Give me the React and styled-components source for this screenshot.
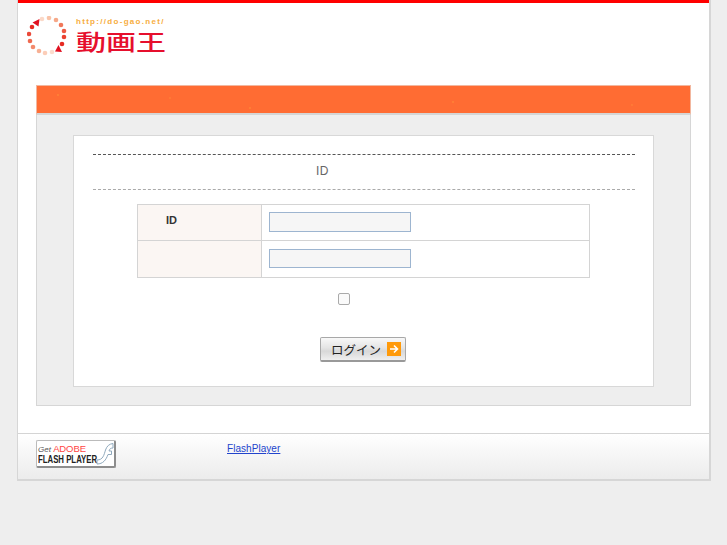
import React from "react";
import styled, { createGlobalStyle } from "styled-components";

const GlobalStyle = createGlobalStyle`
  html, body {
    margin: 0;
    padding: 0;
    background: #eeeeee;
    font-family: "Liberation Sans", Arial, "Noto Sans CJK JP", sans-serif;
    color: #444;
  }
`;

const Page = styled.div`
  width: 694px;
  height: 481px;
  margin-left: 17px;
  box-sizing: border-box;
  display: flex;
  flex-direction: column;
  background: #fff;
  border-left: 1px solid #d6d6d6;
  border-right: 2px solid #d6d6d6;
  border-bottom: 2px solid #d6d6d6;
`;

const TopLine = styled.div`
  height: 3px;
  background: #ff0000;
  flex: none;
`;

const Header = styled.header`
  height: 82px;
  box-sizing: border-box;
  padding: 13px 0 0 9px;
  display: flex;
  gap: 9px;
  align-items: flex-start;
`;

const LogoText = styled.div`
  display: flex;
  flex-direction: column;
  width: 92px;
`;

const LogoUrl = styled.span`
  font-size: 8px;
  line-height: 10px;
  margin-top: 1px;
  font-weight: bold;
  letter-spacing: 1.3px;
  color: #f7ad3e;
  white-space: nowrap;
`;

const LogoName = styled.span`
  font-family: "Noto Sans CJK JP", sans-serif;
  font-size: 30px;
  font-weight: 500;
  line-height: 30px;
  margin-top: 3px;
  color: #e60f2d;
  white-space: nowrap;
  transform: scaleY(0.72);
  transform-origin: left top;
`;

const Main = styled.main`
  margin: 0 18px;
  height: 321px;
  box-sizing: border-box;
  display: flex;
  flex-direction: column;
  flex: none;
`;

const OrangeBar = styled.div`
  height: 30px;
  flex: none;
  box-sizing: border-box;
  background-color: #ff6c33;
  background-image:
    radial-gradient(circle at 21px 9px, #ffb43c 0.4px, transparent 0.8px),
    radial-gradient(circle at 133px 12px, #ffa03c 0.4px, transparent 0.8px),
    radial-gradient(circle at 213px 22px, #ffb43c 0.4px, transparent 0.8px),
    radial-gradient(circle at 416px 16px, #ffb43c 0.4px, transparent 0.8px),
    radial-gradient(circle at 595px 19px, #ffa03c 0.4px, transparent 0.8px);
  border: 1px solid #f2b79f;
  border-bottom: 2px solid #d5d5d5;
`;

const Panel = styled.div`
  flex: 1;
  box-sizing: border-box;
  background: #eeeeee;
  border: 1px solid #d6d6d6;
  border-top: 0;
  padding: 20px 36px 18px 36px;
`;

const Card = styled.div`
  height: 252px;
  box-sizing: border-box;
  background: #fff;
  border: 1px solid #d8d8d8;
  padding: 18px 18px 0 19px;
  display: flex;
  flex-direction: column;
`;

const Heading = styled.div`
  height: 36px;
  box-sizing: border-box;
  flex: none;
  border-top: 1px dashed #555;
  border-bottom: 1px dashed #aaa;
  font-size: 12px;
  line-height: 32px;
  letter-spacing: 0.5px;
  color: #666;
  padding-left: 223px;
`;

const FormTable = styled.div`
  margin: 14px 0 0 44px;
  width: 453px;
  display: grid;
  grid-template-columns: 124px 1fr;
  grid-template-rows: 36px 36px;
  box-sizing: border-box;
  border: 1px solid #d4d4d4;
`;

const LabelCell = styled.div`
  background: #fbf6f3;
  border-right: 1px solid #d4d4d4;
  border-bottom: ${(p) => (p.$last ? "0" : "1px solid #d4d4d4")};
  box-sizing: border-box;
  padding-left: 28px;
  font-size: 11px;
  font-weight: bold;
  line-height: 31px;
  color: #333;
`;

const InputCell = styled.div`
  border-bottom: ${(p) => (p.$last ? "0" : "1px solid #d4d4d4")};
  box-sizing: border-box;
  padding: ${(p) => (p.$last ? "8px" : "7px")} 0 0 7px;
`;

const TextInput = styled.input`
  display: block;
  width: 142px;
  height: ${(p) => (p.$short ? "19px" : "20px")};
  box-sizing: border-box;
  background: #f6f6f6;
  border: 1px solid #9db5d0;
  padding: 0 2px;
  margin: 0;
  outline: none;
`;

const CheckRow = styled.div`
  display: flex;
  margin: 15px 0 0 245px;
`;

const CheckBox = styled.input`
  appearance: none;
  width: 12px;
  height: 12px;
  margin: 0;
  box-sizing: border-box;
  background: #fafafa;
  border: 1px solid #aaa;
  border-radius: 2px;
`;

const ButtonRow = styled.div`
  display: flex;
  margin: 32px 0 0 227px;
`;

const LoginButton = styled.button`
  width: 86px;
  height: 25px;
  box-sizing: border-box;
  padding: 0 4px 0 10px;
  display: flex;
  align-items: center;
  justify-content: space-between;
  background: linear-gradient(#f8f8f8, #e4e4e4 45%, #d8d8d8 60%, #efefef);
  border: 1px solid #a8a8a8;
  border-bottom: 2px solid #999;
  border-radius: 2px;
  font-family: "Noto Sans CJK JP", sans-serif;
  font-size: 12.5px;
  font-weight: 400;
  color: #222;
`;

const Footer = styled.footer`
  flex: 1;
  margin-top: 27px;
  box-sizing: border-box;
  border-top: 1px solid #d4d4d4;
  background: linear-gradient(#ffffff, #f9f9f9 30%, #ececec);
  padding: 6px 0 0 18px;
  display: flex;
  align-items: flex-start;
`;

const FlashBadge = styled.div`
  width: 80px;
  height: 28px;
  box-sizing: border-box;
  flex: none;
  position: relative;
  background: #fff;
  border: 1px solid #bbb;
  border-right: 2px solid #8d8d8d;
  border-bottom: 2px solid #8d8d8d;
  border-radius: 2px;
  padding: 3px 0 0 1px;
  display: flex;
  flex-direction: column;
  white-space: nowrap;
`;

const BadgeTop = styled.span`
  font-size: 8px;
  line-height: 9px;
  font-style: italic;
  color: #555;
`;

const BadgeAdobe = styled.span`
  font-style: normal;
  color: #f44;
  font-size: 9.5px;
  letter-spacing: -0.1px;
`;

const BadgeBottom = styled.span`
  font-size: 10px;
  line-height: 11px;
  font-weight: bold;
  color: #222;
  transform: scaleX(0.78);
  transform-origin: left top;
`;

const BadgeSwoosh = styled.svg`
  position: absolute;
  right: 0;
  top: 1px;
`;

const FlashLink = styled.a`
  margin: 3px 0 0 111px;
  font-size: 10px;
  line-height: 12px;
  letter-spacing: 0.05px;
  color: #2244cc;
  text-decoration: underline;
`;

const dots = [
  [42, 19, "#fbd9c8"], [49, 18, "#f9c3a8"], [56, 20, "#f6a888"], [61, 25, "#f0785a"],
  [64, 31, "#ee5a44"], [64, 37, "#ea4030"], [62, 44, "#e62a22"],
  [52, 52, "#fcdccd"], [45, 53, "#fbcdb8"], [39, 51, "#f7b094"], [33, 47, "#f38a6c"],
  [30, 41, "#ef6a50"], [29, 34, "#ea4a3a"], [32, 27, "#e62a22"],
];

const LogoRing = () => (
  <svg width="40" height="40" viewBox="27 16 40 40">
    {dots.map(([x, y, c]) => (
      <circle key={`${x}-${y}`} cx={x} cy={y} r="2.3" fill={c} />
    ))}
    <path d="M32.5 22.5 L39.5 19 L38.5 26.5 Z" fill="#e01020" />
    <path d="M62 52 L55 51.5 L58.5 45 Z" fill="#e01020" />
  </svg>
);

const ArrowIcon = () => (
  <svg width="14" height="14" viewBox="0 0 14 14">
    <rect width="14" height="14" fill="#ff9a0a" />
    <path d="M3 7 H10 M7 3.5 L10.5 7 L7 10.5" fill="none" stroke="#fff" strokeWidth="1.6" />
  </svg>
);

export default function App() {
  return (
    <>
      <GlobalStyle />
      <Page>
        <TopLine />
        <Header>
          <LogoRing />
          <LogoText>
            <LogoUrl>http://do-gao.net/</LogoUrl>
            <LogoName>動画王</LogoName>
          </LogoText>
        </Header>
        <Main>
          <OrangeBar />
          <Panel>
            <Card>
              <Heading>ID</Heading>
              <FormTable>
                <LabelCell>ID</LabelCell>
                <InputCell>
                  <TextInput type="text" />
                </InputCell>
                <LabelCell $last />
                <InputCell $last>
                  <TextInput type="password" $short />
                </InputCell>
              </FormTable>
              <CheckRow>
                <CheckBox type="checkbox" />
              </CheckRow>
              <ButtonRow>
                <LoginButton type="button">
                  ログイン
                  <ArrowIcon />
                </LoginButton>
              </ButtonRow>
            </Card>
          </Panel>
        </Main>
        <Footer>
          <FlashBadge>
            <BadgeTop>
              Get <BadgeAdobe>ADOBE</BadgeAdobe>
            </BadgeTop>
            <BadgeBottom>FLASH PLAYER</BadgeBottom>
            <BadgeSwoosh width="18" height="23" viewBox="0 0 18 23">
              <path
                d="M1 18 C7 18 8 13 9.5 8 C11 4 13 2 17 1.5 L17 6 C14.5 6 13.5 7 13 9 L15.5 9 L15.5 12.5 L12 12.5 C10 18 7 22 1 22 Z"
                fill="#fff"
                stroke="#8fa9bd"
                strokeWidth="1"
              />
            </BadgeSwoosh>
          </FlashBadge>
          <FlashLink href="#">FlashPlayer</FlashLink>
        </Footer>
      </Page>
    </>
  );
}
